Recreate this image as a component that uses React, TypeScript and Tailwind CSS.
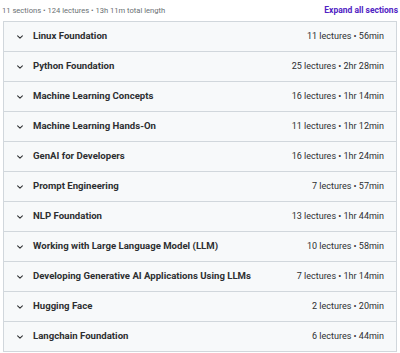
import React from 'react';

interface Section {
    title: string;
    meta: string;
}

const sections: Section[] = [
    { title: 'Linux Foundation', meta: '11 lectures • 56min' },
    { title: 'Python Foundation', meta: '25 lectures • 2hr 28min' },
    { title: 'Machine Learning Concepts', meta: '16 lectures • 1hr 14min' },
    { title: 'Machine Learning Hands-On', meta: '11 lectures • 1hr 12min' },
    { title: 'GenAI for Developers', meta: '16 lectures • 1hr 24min' },
    { title: 'Prompt Engineering', meta: '7 lectures • 57min' },
    { title: 'NLP Foundation', meta: '13 lectures • 1hr 44min' },
    { title: 'Working with Large Language Model (LLM)', meta: '10 lectures • 58min' },
    { title: 'Developing Generative AI Applications Using LLMs', meta: '7 lectures • 1hr 14min' },
    { title: 'Hugging Face', meta: '2 lectures • 20min' },
    { title: 'Langchain Foundation', meta: '6 lectures • 44min' },
];

const Chevron = () => (
    <svg width="8" height="8" viewBox="0 0 10 10" fill="none" className="text-[#2d2f31] shrink-0">
        <path d="M2 3.5 L5 6.5 L8 3.5" stroke="currentColor" strokeWidth="1.3" strokeLinecap="round" strokeLinejoin="round" />
    </svg>
);

export default function App() {
    return (
        <div className="w-[400px] h-[353px] bg-white overflow-hidden font-['Roboto',sans-serif] text-[#2d2f31]">
            <div className="flex items-center justify-between h-[21px] pl-[2px] pr-[2px]">
                <span className="text-[7.6px] text-[#6a6f73]">11 sections • 124 lectures • 13h 11m total length</span>
                <span className="text-[8.5px] font-bold text-[#5022c3]">Expand all sections</span>
            </div>
            <div className="ml-[3px] mr-[3px] border border-[#d1d7dc] border-b-0">
                {sections.map(s => (
                    <div key={s.title} className="flex items-center h-[30px] bg-[#f7f9fa] border-b border-[#d1d7dc] pl-[12px] pr-[12px]">
                        <Chevron />
                        <span className="ml-[9px] text-[9.6px] font-bold flex-grow">{s.title}</span>
                        <span className="text-[9px] text-[#2d2f31]">{s.meta}</span>
                    </div>
                ))}
            </div>
        </div>
    );
}
